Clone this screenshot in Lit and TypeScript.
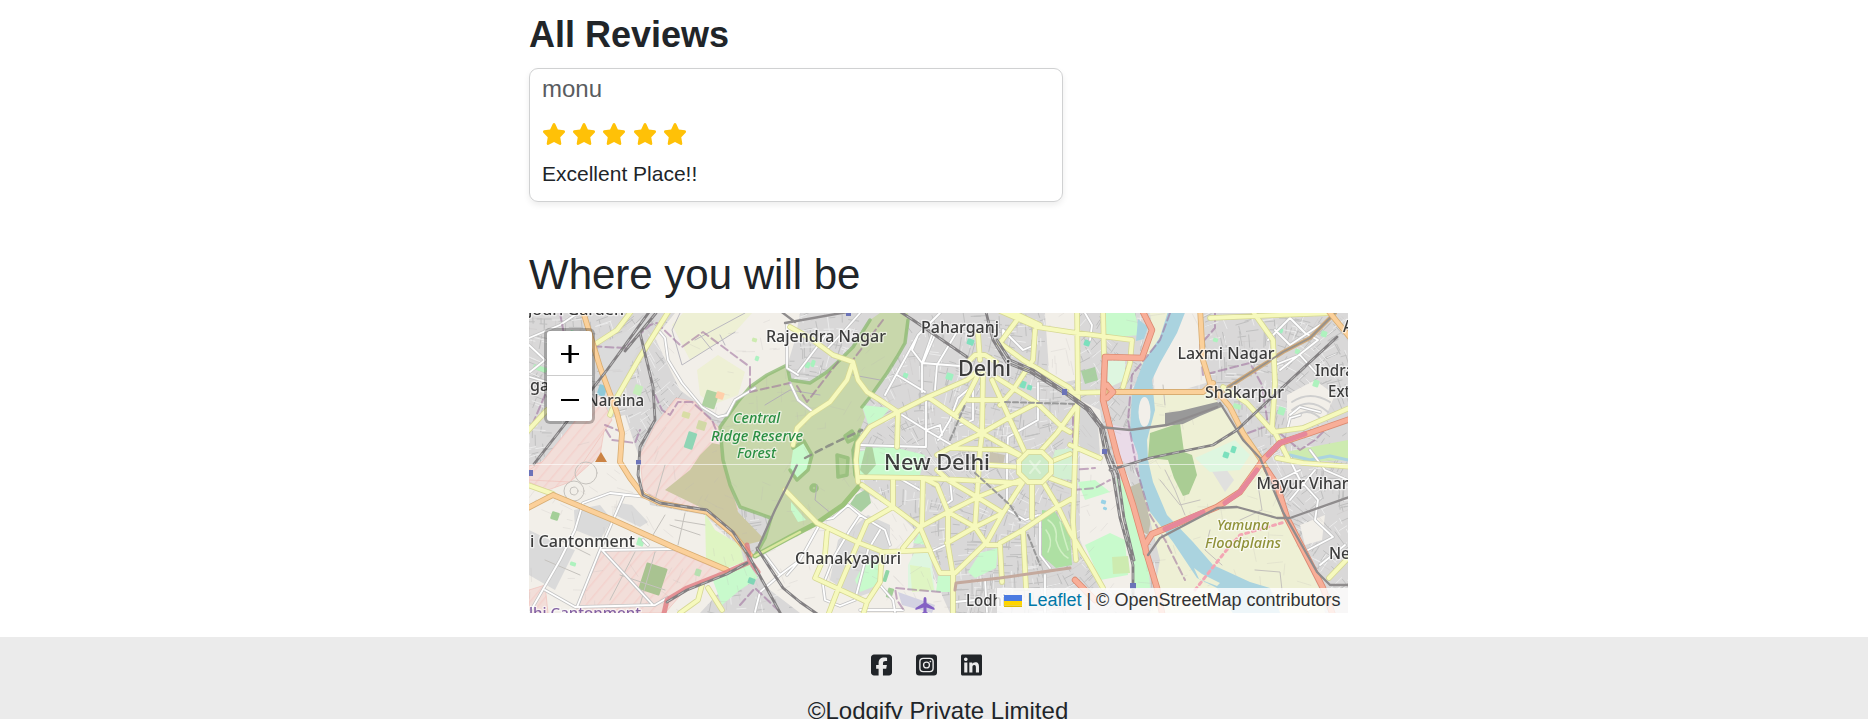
import { LitElement, html, css, svg } from "lit";
import { customElement } from "lit/decorators.js";

const STAR =
  "M316.9 18C311.6 7 300.4 0 288.1 0s-23.4 7-28.8 18L195 150.3 51.4 171.5c-12 1.8-22 10.2-25.7 21.7s-.7 24.2 7.9 32.7L137.8 329 113.2 474.7c-2 12 3 24.2 12.9 31.3s23 8 33.8 2.3l128.3-68.5 128.3 68.5c10.8 5.7 23.9 4.9 33.8-2.3s14.9-19.3 12.9-31.3L438.5 329 542.7 225.9c8.6-8.5 11.7-21.2 7.9-32.7s-13.7-19.9-25.7-21.7L381.2 150.3 316.9 18z";
const FACEBOOK =
  "M64 32C28.7 32 0 60.7 0 96V416c0 35.3 28.7 64 64 64h98.2V334.2H109.4V256h52.8V222.3c0-87.1 39.4-127.5 125-127.5c16.2 0 44.2 3.2 55.7 6.4V172c-6-.6-16.5-1-29.6-1c-42 0-58.2 15.9-58.2 57.2V256h83.6l-14.4 78.2H255V480H384c35.3 0 64-28.7 64-64V96c0-35.3-28.7-64-64-64H64z";
const LINKEDIN =
  "M416 32H31.9C14.3 32 0 46.5 0 64.3v383.4C0 465.5 14.3 480 31.9 480H416c17.6 0 32-14.5 32-32.3V64.3c0-17.8-14.4-32.3-32-32.3zM135.4 416H69V202.2h66.5V416zm-33.2-243c-21.3 0-38.5-17.3-38.5-38.5S80.9 96 102.2 96c21.2 0 38.5 17.3 38.5 38.5 0 21.3-17.2 38.5-38.5 38.5zm282.1 243h-66.4V312c0-24.8-.5-56.7-34.5-56.7-34.6 0-39.9 27-39.9 54.9V416h-66.4V202.2h63.7v29.2h.9c8.9-16.8 30.6-34.5 62.9-34.5 67.2 0 79.7 44.3 79.7 101.9V416z";

/* Land use polygons: [fill, points]. Map units run 529..1348 by 313..613. */
const areas: [string, string][] = [
  ["#f2efe9", "655,338 675,313 800,313 795,340 787,366 750,387 730,408 720,418 700,405 680,390 668,365"],
  ["#eef0d5", "672,325 683,313 752,313 735,332 690,360"],
  ["#eef0d5", "697,370 718,355 745,372 738,395 712,405 700,395"],
  ["#f2efe9", "529,470 600,420 625,415 640,460 650,505 705,515 735,545 740,570 700,613 529,613"],
  ["#dadada", "574,510 600,505 612,520 600,540 575,530"],
  ["#dadada", "620,503 632,505 648,522 640,527 615,515"],
  ["#dadada", "529,530 560,545 575,550 555,590 529,575"],
  ["#f2ded9", "542,462 605,425 600,455 570,482 548,490 529,482 529,466"],
  ["#f2ded9", "542,462 580,415 600,395 612,420 595,445 570,482 529,480 529,470"],
  ["#f2ded9", "655,425 676,398 695,402 708,418 722,430 730,488 738,510 712,512 660,500 643,490 640,455"],
  ["#ccc8a2", "665,490 690,470 700,455 712,443 722,445 725,462 732,490 738,512 765,540 745,545 710,512"],
  ["#f2ded9", "602,550 672,550 725,572 685,590 665,613 575,613"],
  ["#f2ded9", "529,590 545,585 548,613 529,613"],
  ["#dff5c3", "705,513 715,530 740,545 744,562 727,568 706,560"],
  ["#c8facc", "712,578 748,563 758,578 740,590 722,605"],
  ["#f2efe9", "750,560 800,535 860,490 895,510 915,530 912,560 935,580 950,613 800,613 770,590"],
  ["#dadada", "838,540 868,515 890,525 890,545 878,590 855,598 830,580"],
  ["#c8facc", "865,562 880,560 878,585 860,592 855,580"],
  ["#def6e0", "914,553 930,550 935,592 908,590 908,565"],
  ["#dff5c3", "910,565 930,568 934,590 912,592"],
  ["#c8facc", "913,543 922,530 927,545"],
  ["#c8facc", "938,576 953,576 953,592 936,592"],
  ["#c8facc", "968,572 980,553 998,548 996,568 975,578"],
  ["#c8facc", "862,405 890,408 880,420 868,424"],
  ["#c8facc", "858,452 885,445 905,450 925,455 920,475 860,478"],
  ["#aed1a0", "866,446 872,445 876,465 866,476 860,470"],
  ["#a9cfa1", "856,495 868,488 871,503 861,512 850,504"],
  ["#aee0a3", "1042,510 1055,512 1070,535 1072,565 1056,568 1042,556"],
  ["#d3f0d2", "1055,450 1072,448 1072,480 1055,478 1050,467"],
  ["#c8c2b0", "990,452 1005,455 1003,466 988,464"],
  ["#f2efe9", "1045,313 1075,313 1075,380 1050,385"],
  ["#f2efe9", "1080,400 1100,410 1108,460 1118,500 1130,540 1133,590 1100,590 1080,540"],
  ["#d6d6d6", "1080,400 1098,425 1100,455 1080,450"],
  ["#c8facc", "1105,313 1135,313 1140,335 1105,338"],
  ["#def6e0", "1107,361 1125,360 1125,380 1108,388"],
  ["#a9cfa1", "1081,371 1095,367 1098,380 1085,384"],
  ["#c8facc", "1078,482 1095,480 1110,492 1085,500"],
  ["#c8facc", "1085,545 1110,533 1125,540 1128,575 1100,580"],
  ["#cdebb0", "1112,557 1128,556 1130,573 1113,574"],
  ["#c8facc", "1116,478 1125,482 1148,555 1150,588 1135,588 1128,540"],
  ["#c2c0ae", "1130,487 1141,482 1152,515 1148,535 1140,530"],
  ["#eadbe8", "1113,425 1135,430 1138,460 1128,465 1115,455"],
  ["#eef0d5", "1150,313 1175,313 1165,340 1145,370 1140,360 1153,335"],
  ["#f2efe9", "1180,313 1200,313 1206,383 1155,398 1153,370 1170,345"],
  ["#eef0d5", "1153,395 1210,392 1235,425 1260,458 1275,490 1290,530 1320,590 1325,613 1150,613 1160,560 1140,480 1145,440"],
  ["#e0e0de", "1208,465 1218,458 1234,480 1225,492"],
  ["#def6e0", "1195,458 1235,440 1250,455 1240,470 1210,472"],
  ["#aacd94", "1150,433 1180,423 1184,452 1192,455 1197,475 1189,494 1183,496 1174,478 1168,460 1148,458"],
  ["#f2efe9", "1287,395 1315,380 1335,395 1325,418 1287,430"],
  ["#f2efe9", "1300,525 1325,515 1322,540 1305,545"],
  ["#cdebb0", "1285,452 1348,440 1348,460 1300,462"],
  ["#c8d7ab", "787,365 790,380 810,383 827,372 840,360 853,347 870,320 880,313 908,313 909,325 905,343 897,357 887,373 870,397 862,407 865,417 860,430 853,450 855,475 860,485 843,505 817,523 790,537 755,556 765,538 771,518 740,507 730,485 723,460 720,447 720,427 737,403 750,387 767,375"],
  ["#c8facc", "793,450 803,443 810,455 808,468 797,478 790,470"],
  ["#c8facc", "791,502 806,520 798,522 791,510"],
];

const patches: [number, number, number, number, string][] = [
  [704, 391, 13, 17, "#aed1a0"], [686, 432, 9, 17, "#8fd5b5"], [642, 565, 22, 28, "#a9c391"],
  [695, 569, 6, 7, "#b7dfb0"], [551, 512, 8, 8, "#a3cf98"], [570, 331, 8, 5, "#9fe8b4"],
  [716, 392, 8, 7, "#ffcfaa"], [634, 385, 8, 10, "#c6edbb"], [682, 412, 8, 6, "#d9dda5"],
  [697, 421, 9, 9, "#d2d9a6"], [752, 338, 5, 4, "#cdebb0"], [755, 356, 4, 5, "#aef2c2"],
  [533, 366, 14, 5, "#b5f2bd"], [547, 341, 9, 5, "#a8c9a1"], [598, 385, 8, 11, "#8fc9d8"],
  [903, 373, 5, 5, "#9ff0c0"], [946, 373, 7, 7, "#9ff0c0"], [967, 339, 7, 6, "#7fe0bd"],
  [1020, 381, 6, 7, "#7fe0bd"], [1027, 385, 5, 5, "#7fe0bd"], [1084, 340, 6, 6, "#7be0bd"],
  [1223, 452, 6, 6, "#7be0bd"], [1231, 446, 5, 7, "#7be0bd"], [805, 362, 5, 6, "#a8f2be"],
  [811, 360, 4, 7, "#a8f2be"], [1277, 328, 6, 5, "#9ff0c0"], [1313, 380, 6, 7, "#aef2be"],
  [1321, 331, 6, 6, "#aef2be"], [1295, 349, 5, 5, "#aef2be"], [1278, 407, 7, 8, "#aef2be"],
  [1233, 404, 8, 5, "#b5f2bd"], [1213, 338, 5, 4, "#aef2be"], [570, 562, 6, 4, "#aef2be"],
  [637, 538, 7, 8, "#aef2be"], [748, 578, 7, 6, "#7fd5b5"], [884, 570, 4, 12, "#8fd5a5"],
  [887, 588, 6, 10, "#a3cf98"], [1101, 500, 5, 4, "#9ad2e6"], [1103, 507, 4, 3, "#9ad2e6"],
];

const river =
  "M1170,305 L1188,305 L1177,333 L1160,363 L1152,380 L1155,410 L1147,440 L1148,460 L1153,482 L1167,515 L1193,542 L1213,565 L1250,582 L1270,588 L1283,620 L1237,620 L1217,588 L1197,578 L1173,542 L1150,512 L1140,482 L1138,455 L1130,433 L1132,393 L1143,363 L1160,337Z";

const minor = [
  "M660,332 665,338 668,360 682,383 702,407 718,417 727,415 735,400 755,388", "M787,325 787,368 798,375",
  "M529,338 560,325 575,315", "M529,345 545,360 530,372", "M530,377 547,382",
  "M647,497 610,493 583,503 575,530 560,560 530,612", "M624,495 600,550 577,607 M545,590 575,607 655,605 667,598",
  "M602,550 673,549 M602,550 653,605", "M643,540 648,545", "M826,335 798,372", "M860,313 845,330 826,350",
  "M790,383 798,400 813,412", "M940,313 918,335 885,395 M918,335 912,350 922,363 932,335",
  "M897,375 925,392 M922,363 922,392 M937,330 923,363", "M958,330 937,365 935,390 M922,363 960,366",
  "M926,400 926,447 860,445 M902,415 926,430 960,450", "M926,430 940,425 942,435",
  "M938,440 950,420 958,398 970,388", "M973,390 973,420 960,425 M1038,383 1038,420 1008,437 1007,460",
  "M1003,343 1003,330 1023,350 1035,345", "M1007,455 1007,508", "M899,478 920,490",
  "M950,480 952,500 945,505", "M1008,510 1025,520 1038,515 M1040,515 1040,555 1050,568 M1045,575 1045,612",
  "M787,575 800,560 822,520 833,518 848,505 860,515 M860,515 885,530 890,545",
  "M860,515 850,530 835,555 823,585 825,600 840,606 855,600 868,550 880,530",
  "M765,555 780,575 800,560 M780,575 760,592 755,612", "M880,585 893,600 895,612",
  "M930,552 946,545", "M985,580 987,612 M955,602 975,600", "M860,610 903,610",
  "M1085,313 1092,325 1090,340", "M1268,340 1290,318 1305,333 1318,340 1280,370 M1275,330 1290,345 1320,325",
  "M1275,365 1300,355 1318,375", "M1290,415 1300,407 1320,412 M1287,430 1290,418 1300,415",
  "M1290,460 1300,480 1318,500 1315,520 1333,537 M1308,550 1333,537", "M1300,470 1280,480 M1310,450 1325,470 1348,480",
  "M1290,500 1315,470", "M1320,565 1345,545",
];
const yellow = [
  "M670,309 640,357 617,397 610,415", "M633,309 617,330 597,343", "M525,434 547,410", "M525,484 553,494",
  "M790,327 810,338 833,355 853,362", "M853,362 858,380 867,392 880,400 898,412",
  "M853,362 847,380 830,402 810,415 797,428 793,445", "M898,412 870,427 858,443 856,460 858,482", "M898,412 897,447",
  "M898,412 928,397 967,380 977,372", "M978,333 980,360", "M928,397 957,417 982,433 1020,455",
  "M977,377 967,397 955,415", "M983,373 982,433 980,450 977,497 975,527", "M992,380 1007,413 1027,457",
  "M997,378 1037,403 1063,428 1070,432", "M968,400 1003,400", "M1037,403 1010,417 982,433 950,448 937,455",
  "M950,448 1007,450 1020,456", "M1035,330 1033,360 1013,390 1000,405", "M1000,311 1037,327 1070,332 1132,340 1130,363 1123,387",
  "M1010,311 1040,325", "M970,360 975,355 985,355 996,362",
  "M1017,320 1000,343 1023,360 1070,388 1078,400", "M1077,405 1057,433 1037,455",
  "M860,477 923,478 1020,483", "M862,485 893,507 920,527 933,558 940,573 955,573",
  "M893,478 893,507 867,522 857,545 837,592 827,618", "M923,478 922,525 903,548",
  "M920,527 948,512 978,497 1020,480", "M923,478 937,485 948,512 948,545 953,575 953,618",
  "M937,470 948,480 977,497 1003,513", "M948,512 975,527 987,545 1000,545 1002,582",
  "M947,543 975,527 1003,513 1023,482", "M955,573 987,542 1003,513", "M1032,482 1032,518",
  "M1043,482 1057,505 1070,532 1090,565 1103,588", "M1000,543 1023,530 1057,507 1073,498", "M1023,530 1026,588",
  "M990,465 1020,467", "M1050,462 1070,454", "M1050,478 1072,486", "M785,490 817,523 857,542 883,552 930,550",
  "M827,532 825,555 815,578 867,602 880,582 882,552", "M867,602 862,618", "M1077,308 1078,397 1075,457 1073,522 1076,560",
  "M1103,308 1104,357", "M1070,393 1107,392", "M1070,445 1100,458", "M1210,318 1280,315 1333,313",
  "M1251,309 1273,340 1275,383 1272,427 1288,458", "M1223,387 1247,403 1273,432 1303,428 1354,406",
  "M1277,458 1303,463 1354,467", "M1329,578 1352,554", "M702,585 698,600 680,613", "M708,588 722,610",
];
const orange = [
  "M582,308 600,367 617,413 622,433 620,462 630,478 643,495 660,503 707,512 733,534 750,555",
  "M524,510 553,495 613,520 673,547 727,570", "M1110,392 1203,392 1213,383",
  "M1200,308 1203,360 1210,383 1230,407 1243,433 1260,458 1267,470", "M1326,308 1352,340",
];
const trunk = [
  "M1141,308 1152,330 1142,358 1105,357 1103,400 1117,455 1133,505 1147,555 1157,588 1163,618",
  "M1107,385 1113,392 1107,398", "M1146,553 1145,545 1152,534 1217,507 1240,492 1263,460 1280,443 1310,433 1353,418",
  "M1267,470 1277,485 1287,518 1323,588 1334,618", "M1075,580 1095,600",
];
const pink = ["M1165,529 1203,512", "M1225,503 1240,492 1257,470", "M1268,455 1280,443 1305,434"];
const rail = [
  "M652,308 607,370 534,464", "M656,313 625,351",
  "M640,333 653,387 655,420 640,447 638,475 643,495 660,503 707,510 733,532 750,558 783,618",
  "M757,548 783,588 800,602 823,618", "M896,309 913,320 967,357",
  "M985,308 993,340 1007,363 1030,372 1063,392 1087,410 1100,427 1105,453 1113,475 1120,518 1133,565 1133,595",
  "M997,340 1010,360 1033,370 1067,393 1090,409 1103,427 1109,453 1118,475 1124,518 1134,560",
  "M1110,470 1150,458 1213,445 1237,430 1283,387 1337,337", "M667,602 687,590 727,574 747,563",
];
const metro = [
  "M1100,427 1130,430 1167,425 1217,407", "M1220,403 1243,440 1260,458 1283,512 1317,572 1330,585 1352,585",
  "M1148,555 1160,538 1217,508 1237,507 1277,518 1290,518 1352,496",
  "M785,323 847,312", "M797,465 790,480 775,510 757,550", "M779,310 795,322",
];
const boundaries = [
  "M560,313 566,345 580,345 605,347 625,348 650,325 657,323 682,347 703,332 750,367 750,392 790,383",
  "M545,395 530,430", "M655,395 662,410 670,415 678,402 692,402 712,420 720,440", "M883,320 853,360 M838,362 807,402",
  "M807,402 797,386", "M813,412 795,430", "M940,592 895,588 897,600 905,612",
  "M1170,313 1160,340 1132,375 1128,420 1137,470 1150,515 1165,540 1185,580", "M1215,313 1215,328 1200,345 1203,375 1250,363 1262,385 1268,425",
  "M1073,490 1095,488 1110,480", "M740,605 755,588 780,612", "M1248,433 1270,425 1300,450 1315,440 1325,430",
  "M605,425 622,432 M606,430 612,440 635,443 640,430", "M1073,405 1073,470 1095,468",
];

type Label = [string, number, number, number, number, string?];
const labels: Label[] = [
  ["jouri Garden", 528, 315, 96, 15], ["Rajendra Nagar", 766, 341.5, 120, 15.5], ["Paharganj", 921, 332.5, 78, 15.5],
  ["Delhi", 958, 376, 53, 22], ["New Delhi", 884, 469.5, 106, 22], ["Chanakyapuri", 795, 564, 106, 15.5],
  ["Laxmi Nagar", 1177.5, 358.500, 97, 15.5], ["Shakarpur", 1205, 398, 79, 15.5], ["Indra", 1315, 375.5, 39, 15.5],
  ["Exte", 1328, 396.5, 31, 15.5], ["Mayur Vihar", 1256.5, 489, 92, 15.5], ["Ne", 1329, 558.5, 21, 15.5],
  ["Lodhi", 966, 606, 40, 15.5], ["Naraina", 587, 406, 57, 15.5], ["i Cantonment", 530, 546.5, 105, 15.5],
  ["gar", 530, 391, 26, 15.5], ["A", 1343, 332, 10, 15.5], ["lhi Cantonment", 529, 618, 112, 15, "violet"],
  ["Central", 733, 422.5, 47, 14.5, "forest"], ["Ridge Reserve", 711, 440.5, 92, 14.5, "forest"],
  ["Forest", 737, 458, 39, 14.5, "forest"], ["Yamuna", 1217, 529.5, 52, 14.5, "flood"], ["Floodplains", 1205, 547.5, 76, 14.5, "flood"],
];

/* Fine street mesh that fills the built-up areas. */
function mesh(count: number, seed: number): string {
  let s = seed;
  const rnd = () => (s = (s * 16807) % 2147483647) / 2147483647;
  let d = "";
  for (let i = 0; i < count; i++) {
    const x = 529 + rnd() * 819;
    const y = 313 + rnd() * 300;
    const a = (Math.floor(rnd() * 2) * Math.PI) / 2 + Math.sin(x / 70) + Math.cos(y / 60);
    const l = 4 + rnd() * 12;
    d += `M${x.toFixed(1)},${y.toFixed(1)}l${(Math.cos(a) * l).toFixed(1)},${(Math.sin(a) * l).toFixed(1)}`;
  }
  return d;
}
const denseMesh = mesh(2400, 71);
const lightMesh = mesh(1300, 913);
const faintMesh = mesh(500, 4242);

const join = (list: string[]) => list.join(" ");

@customElement("area-map")
class AreaMap extends LitElement {
  static styles = css`
    :host { display: block; position: relative; height: 300px; overflow: hidden; background: #ddd; }
    .tiles { display: block; width: 100%; height: 100%; }
    .raster { filter: blur(0.45px); }
    .line { fill: none; stroke-linejoin: round; stroke-linecap: round; }
    text { font-family: "Noto Sans", sans-serif; font-weight: 500; fill: #3c3c3c; stroke: rgba(255, 255, 255, 0.6); stroke-width: 2.6px; paint-order: stroke; stroke-linejoin: round; }
    .forest { font-style: italic; fill: #2b8f43; }
    .flood { font-style: italic; fill: #8f9138; }
    .violet { fill: #8461a3; }
    .zoom { position: absolute; left: 15px; top: 15px; width: 45px; border: 3px solid rgba(0, 0, 0, 0.25); border-radius: 6px; background: #fff; background-clip: padding-box; display: flex; flex-direction: column; }
    .zoom button { display: grid; place-items: center; height: 45px; padding: 2px 0 0; border: 0; background: none; }
    .zoom button:first-child { border-bottom: 1px solid #ccc; }
    .attribution { position: absolute; right: 0; bottom: 0; height: 25px; padding: 0 7.5px; display: flex; align-items: center; background: rgba(255, 255, 255, 0.8); color: #333; font: 18px/25px "Liberation Sans", Arial, sans-serif; white-space: pre; }
    .flag { width: 18px; height: 12px; margin-right: 5px; }
    .link { color: #0078a8; }
  `;

  private road(paths: string[], casing: string, fill: string, w: number) {
    const d = join(paths);
    return svg`<path class="line" d=${d} stroke=${casing} stroke-width=${w + 1.6}></path><path class="line" d=${d} stroke=${fill} stroke-width=${w}></path>`;
  }

  render() {
    return html`
      <svg class="tiles" viewBox="529 313 819 300" preserveAspectRatio="none">
        <defs>
          <pattern id="hatch" width="9" height="9" patternUnits="userSpaceOnUse" patternTransform="rotate(40)">
            <rect width="1.5" height="9" fill="#f3d2cd"></rect>
          </pattern>
        </defs>
        <g class="raster">
        <rect x="519" y="303" width="839" height="320" fill="#d9d8d8"></rect>
        <path class="line" d=${denseMesh} stroke="#c0c0c0" stroke-width="1"></path>
        <path class="line" d=${lightMesh} stroke="#ebebeb" stroke-width="1"></path>
        <polygon points="600,345 652,318 640,345 605,420 600,385" fill="#dbdbdb"></polygon>
        ${areas.map(([f, p]) => svg`<polygon points=${p} fill=${f}></polygon>${f === "#f2ded9" ? svg`<polygon points=${p} fill="url(#hatch)" stroke="#f0bcb6" stroke-width=".6"></polygon>` : ""}`)}
        <path class="line" d=${faintMesh} stroke="#b9b4b4" stroke-opacity=".25" stroke-width=".8"></path>
        ${patches.map(([x, y, w, h, f]) => svg`<rect x=${x} y=${y} width=${w} height=${h} rx="1" fill=${f} transform=${`rotate(18 ${x + w / 2} ${y + h / 2})`}></rect>`)}
        <path d=${river} fill="#aad3df"></path>
        <path d="M1138,319 l10,8 -4,12 -8,2z" fill="#aad3df"></path>
        <ellipse cx="1144.500" cy="412" rx="6" ry="15" fill="#f2efe9"></ellipse>
        <path d="M1194,568 l8,6 18,9 -3,3 -18,-7z" fill="#eef0d5"></path>
        <path class="line" d="M1290,455 1310,460 1330,456 1348,460" stroke="#aad3df" stroke-width="3"></path>
        <path d="M1165,413 1180,411 1217,402 1224,406 1200,416 1183,424 1165,426Z" fill="#999"></path>
        <g class="line" stroke="#8cba72" stroke-width="3.500" opacity=".75">
          <path d="M787,365 790,380 810,383 827,372 840,360 853,347 870,320 M908,320 905,343 897,357 887,373 870,397 862,407 M860,430 853,450 855,475 860,485 843,505 817,523 790,537 755,556 765,538 771,518 740,507 730,485 723,460 720,427 737,403 750,387 767,375 787,365"></path>
          <path d="M837,455 848,458 847,475 838,477Z" fill="#a9ca8c"></path>
          <path d="M845,436 852,431 856,438 848,442Z" fill="#a9ca8c"></path>
          <circle cx="814" cy="488" r="3" fill="#a9ca8c"></circle>
          <path d="M793,448 804,441 812,455 808,470 797,480 790,470"></path>
        </g>
        <path class="line" d="M833,515 815,500 817,485 M853,375 880,380 M765,405 790,390 820,395" stroke="#b3b0b5" stroke-width="1"></path>
        <path class="line" d="M680,313 672,330 682,365 735,332 M695,340 745,313 M700,335 712,350 M720,335 725,345" stroke="#bbb9c0" stroke-width="1"></path>
        <g class="line" stroke="#c5c2bd" stroke-width="1">
          <circle cx="586" cy="473" r="11"></circle><circle cx="574" cy="491" r="10"></circle><circle cx="574" cy="491" r="4"></circle>
          <path d="M665,515 650,540 M685,513 678,545 M670,525 700,535 M675,520 705,525 M665,465 655,500 M545,560 580,575 M560,540 590,555 M635,552 610,600 M655,552 640,605 M620,575 665,590"></path>
          <path d="M1165,470 1175,490 1185,515 M1210,530 1205,550 1222,565 M1255,570 1280,572 1282,590 M1240,520 1262,510 1258,485 1270,475 M1160,480 1180,505 1200,500 M1165,405 1163,385"></path>
        </g>
        <path class="line" d="M1292,402 Q1310,390 1330,402 M1292,410 Q1310,396 1328,412 M1294,418 Q1308,405 1322,420" stroke="#cfcfcf" stroke-width="2"></path>
        <path class="line" d="M1048,520 q10,6 8,20 q4,14 12,18 M1046,530 q8,10 2,22 M1060,522 q4,16 8,28" stroke="#d0f0c4" stroke-width="1.500"></path>
        <path d="M898,592 935,605 932,613 902,605Z" fill="#d3d2e2"></path>
        ${this.road(minor, "#c4c4c4", "#fff", 1.8)}
        <path class="line" d="M755,556 790,537 817,523 843,505 860,485" stroke="#9cc37a" stroke-width="5"></path>
        <path class="line" d="M755,556 800,532" stroke="#dbe8a0" stroke-width="2.500"></path>
        <path class="line" d=${join(boundaries)} stroke="#9a6b9a" stroke-opacity=".55" stroke-width="2" stroke-dasharray="8 4"></path>
        <path class="line" d="M1216,398 1227,388 1283,352 1310,338 1335,313" stroke="#cfa878" stroke-width="4"></path>
        ${this.road(yellow, "#d6d894", "#f6f9bd", 4)}
        <path class="line" d="M1227,388 1283,352 1310,338 1335,313" stroke="#97928c" stroke-width="1.800"></path>
        <path d="M1028,452 1042,452 1051,461 1051,473 1042,482 1028,482 1019,473 1019,461Z" stroke="#d6d894" stroke-width="5.500" fill="#cdebc8"></path>
        <path d="M1028,452 1042,452 1051,461 1051,473 1042,482 1028,482 1019,473 1019,461Z" stroke="#f6f9bd" stroke-width="4" fill="none"></path>
        <path class="line" d="M1030,461 1040,473 M1040,461 1030,473" stroke="#dff3da" stroke-width="2"></path>
        ${this.road(orange, "#d8ad72", "#fbd09a", 4.2)}
        ${this.road(trunk, "#dc8a70", "#f8ae98", 4.8)}
        <path class="line" d=${join(pink)} stroke="#e6889b" stroke-width="5"></path>
        <path class="line" d="M663,618 667,600 687,588 727,572 750,562 747,545 M753,565 758,572" stroke="#dd7177" stroke-width="5" opacity=".7"></path>
        <path class="line" d=${join(metro)} stroke="#8f8c8d" stroke-width="2.300"></path>
        <path class="line" d=${join(rail)} stroke="#838082" stroke-width="2.800"></path>
        <path class="line" d=${join(rail)} stroke="#bdbdbd" stroke-width="1" stroke-dasharray="6 7"></path>
        <path class="line" d="M805,458 828,446 862,430" stroke="#8f9388" stroke-width="2.500" stroke-dasharray="7 5"></path>
        <path class="line" d="M1005,402 1075,404 M950,440 965,405 M975,473 1010,505 1020,520 M1028,535 1040,565" stroke="#999" stroke-width="2" stroke-dasharray="5 3"></path>
        <path class="line" d="M955,590 956,583 1000,578 1070,568" stroke="#c4a99d" stroke-width="3"></path>
        <path class="line" d="M1195,590 1225,552 1240,535 1285,522" stroke="#f3a6b4" stroke-width="3" stroke-dasharray="3 4"></path>
        <g fill="#6b73b8">
          <rect x="636" y="460" width="5" height="5"></rect><rect x="529" y="470" width="4" height="6"></rect>
          <rect x="1062" y="389" width="5" height="6"></rect><rect x="1102" y="449" width="5" height="5"></rect>
          <rect x="1130" y="583" width="6" height="6"></rect><rect x="846" y="312" width="5" height="4"></rect>
        </g>
        <path d="M601,452 607,462 595,462Z" fill="#cb8344"></path>
        <path d="M925,597 q1.500,0 1.500,3 l0,3 8,5 0,2 -8,-2.500 0,4 2,2 -7,0 2,-2 0,-4 -8,2.500 0,-2 8,-5 0,-3 q0,-3 1.500,-3z" fill="#8461c4"></path>
        ${labels.map(([t, x, y, w, s, c]) => svg`<text class=${c ?? ""} x=${x} y=${y} font-size=${s} textLength=${w} lengthAdjust="spacingAndGlyphs">${t}</text>`)}
        </g>
        <rect x="529" y="464" width="819" height="1" fill="#fff" opacity=".6"></rect>
      </svg>
      <div class="zoom">
        <button aria-label="Zoom in"><svg width="20" height="20" viewBox="0 0 20 20"><path d="M1 9h18v2H1zM8.500 1h3v18h-3z"></path></svg></button>
        <button aria-label="Zoom out"><svg width="20" height="20" viewBox="0 0 20 20"><path d="M1 9h18v2H1z"></path></svg></button>
      </div>
      <div class="attribution"><svg class="flag" viewBox="0 0 12 8"><path fill="#4C7BE1" d="M0 0h12v4H0z"></path><path fill="#FFD500" d="M0 4h12v3H0z"></path><path fill="#E0BC00" d="M0 7h12v1H0z"></path></svg><span class="link">Leaflet</span><span> | © OpenStreetMap contributors</span></div>
    `;
  }
}

@customElement("app-root")
class AppRoot extends LitElement {
  static styles = css`
    :host { display: block; height: 719px; overflow: hidden; background: #fff; color: #212529; font-family: "Liberation Sans", Arial, sans-serif; }
    .page { width: 819px; padding: 15px 0 24px 529px; }
    h2, h3, p { margin: 0; }
    .reviews { font-size: 36px; line-height: 40px; font-weight: 700; height: 53px; }
    .card { box-sizing: border-box; width: 534px; height: 134px; padding: 5px 12px; border: 1px solid #d0d1d2; border-radius: 9px; box-shadow: 0 3px 6px rgba(0, 0, 0, 0.075); display: flex; flex-direction: column; }
    .author { font-size: 24px; line-height: 30px; color: #595c5f; }
    .stars { display: flex; gap: 6.35px; margin: 19px 0 0; height: 23px; }
    .stars svg { width: 24px; height: 22px; margin-left: -0.5px; margin-right: 0.5px; fill: #ffc107; }
    .comment { font-size: 21px; line-height: 26px; margin-top: 15px; }
    .where { font-size: 42px; line-height: 50px; font-weight: 400; margin: 48px 0 13px; }
    footer { height: 82px; background: #ebebeb; display: flex; flex-direction: column; align-items: center; }
    .social { display: flex; gap: 24px; margin: 16px 15px 0 0; height: 24px; }
    .social svg { width: 21px; height: 24px; fill: #212529; }
    .copy { font-size: 24px; line-height: 36px; margin: 16px 0 0 8px; white-space: nowrap; }
  `;

  render() {
    return html`
      <div class="page">
        <h3 class="reviews">All Reviews</h3>
        <div class="card">
          <p class="author">monu</p>
          <div class="stars">
            ${[1, 2, 3, 4, 5].map(() => html`<svg viewBox="0 0 576 512" preserveAspectRatio="none"><path d=${STAR}></path></svg>`)}
          </div>
          <p class="comment">Excellent Place!!</p>
        </div>
        <h2 class="where">Where you will be</h2>
        <area-map></area-map>
      </div>
      <footer>
        <div class="social">
          <svg viewBox="0 0 448 512"><path d=${FACEBOOK}></path></svg>
          <svg viewBox="0 0 448 512">
            <rect y="32" width="448" height="448" rx="64"></rect>
            <rect x="83" y="115" width="282" height="282" rx="72" fill="none" stroke="#ebebeb" stroke-width="30"></rect>
            <circle cx="224" cy="256" r="63" fill="none" stroke="#ebebeb" stroke-width="28"></circle>
            <circle cx="306" cy="181" r="18" fill="#ebebeb"></circle>
          </svg>
          <svg viewBox="0 0 448 512"><path d=${LINKEDIN}></path></svg>
        </div>
        <p class="copy">©Lodgify Private Limited</p>
      </footer>
    `;
  }
}
